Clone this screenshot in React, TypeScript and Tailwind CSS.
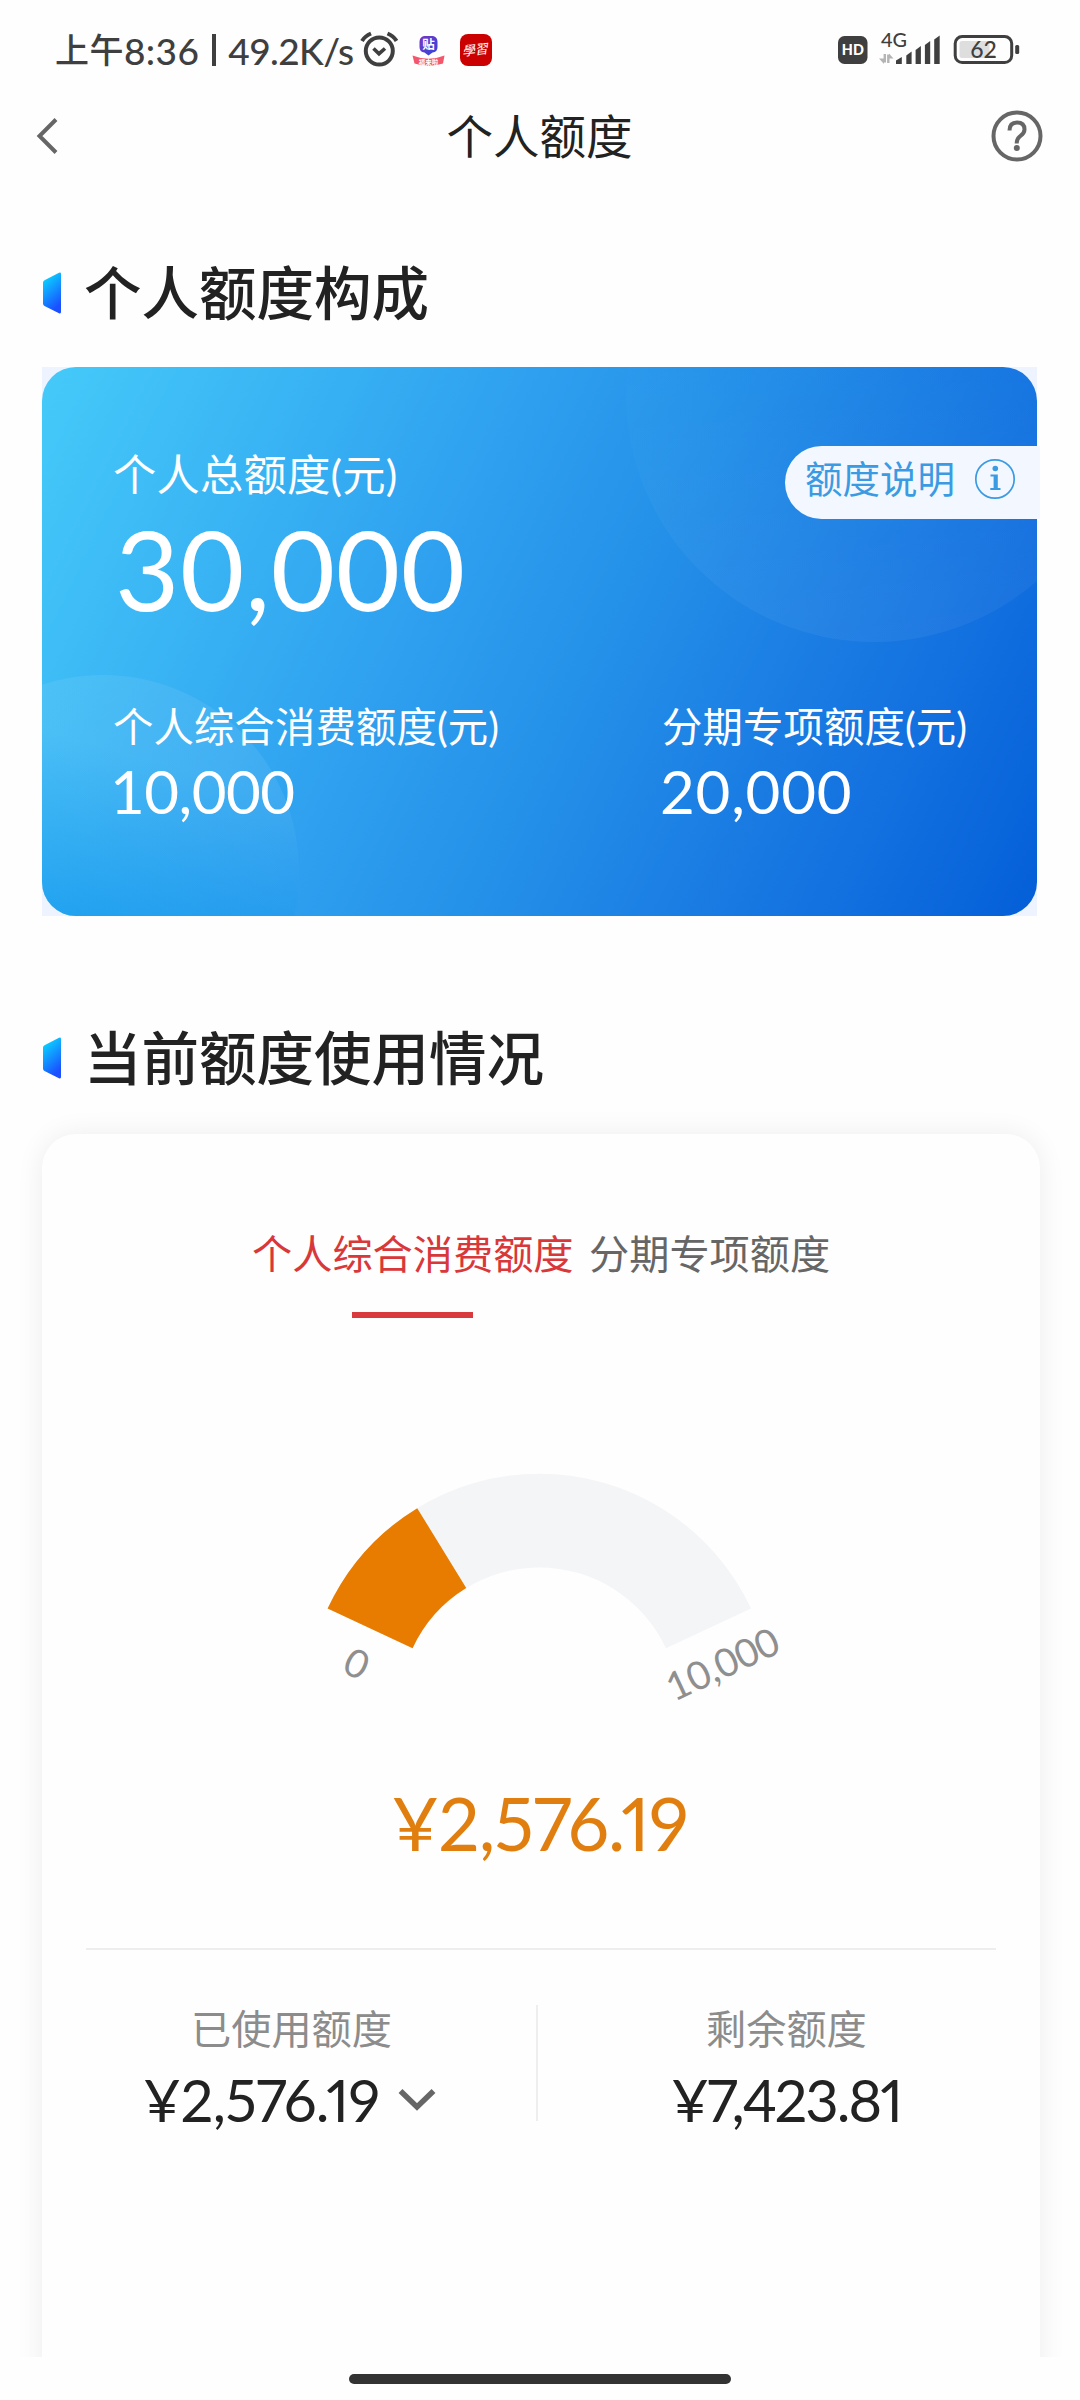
import React from "react";

const SANS = "font-['Lato','Noto_Sans_CJK_SC',sans-serif]";

function StatusBar() {
  return (
    <div className="flex h-[100px] shrink-0 items-center pl-[55px] pr-[60px] text-[#3f3f3f]">
      <div className="flex w-[300px] items-center whitespace-nowrap text-[37px] font-medium leading-none">
        <span className="text-[34px] tracking-[0.5px]">上午</span>
        <span className="tracking-[0.4px]">8:36</span>
        <span className="ml-[13px] mr-[12px] h-[32px] w-[4px] shrink-0 bg-[#3f3f3f]" />
        <span className="tracking-[-0.6px]">49.2K/s</span>
      </div>
      <svg className="ml-[5px] shrink-0" width="38" height="38" viewBox="0 0 38 38" fill="none" stroke="#3f3f3f">
        <circle cx="19.300" cy="20" r="13.500" strokeWidth="4" />
        <path d="M2 10 Q5 5 11 2.500 M36.500 10 Q33.500 5 27.500 2.500" strokeWidth="4" />
        <path d="M13.500 17.500 L19 22.700 L25 17.500" strokeWidth="3.600" />
      </svg>
      <svg className="ml-[14px] shrink-0" width="33" height="33" viewBox="0 0 33 33">
        <defs>
          <linearGradient id="tb" x1="0" y1="0" x2="1" y2="1">
            <stop offset="0" stopColor="#7a35c0" />
            <stop offset="1" stopColor="#2d48e0" />
          </linearGradient>
        </defs>
        <path d="M12 2 H21 Q25.500 3 25.500 8 V13 Q25.500 18 20.500 18.500 L16.500 21.500 L12.500 18.500 Q7.500 18 7.500 13 V8 Q7.500 3 12 2Z" fill="url(#tb)" />
        <text x="16.500" y="15.300" textAnchor="middle" fontSize="12.500" fontWeight="700" fill="#fff" className="font-['Noto_Sans_CJK_SC']">贴</text>
        <path d="M0.500 21.500 Q16.500 28 32.500 21.500 L31 29.500 Q16.500 34 2.500 29.500Z" fill="#f4566c" />
        <text x="16.500" y="31" textAnchor="middle" fontSize="6.500" fontWeight="700" fill="#fff" className="font-['Noto_Sans_CJK_SC']">福来啦</text>
      </svg>
      <svg className="ml-[15px] shrink-0" width="32" height="32" viewBox="0 0 32 32">
        <rect width="32" height="32" rx="8" fill="#cb0000" />
        <text x="16" y="20.500" textAnchor="middle" fontSize="13" fill="#fff" transform="rotate(-6 16 16) skewX(-14) translate(4 0)" className="font-['Noto_Sans_CJK_SC']">學習</text>
      </svg>
      <svg className="ml-auto shrink-0 overflow-visible" width="182" height="40" viewBox="838 30 182 40">
        <rect x="838" y="36" width="29.500" height="28" rx="6.500" fill="#3f3f3f" />
        <text x="852.800" y="55.300" textAnchor="middle" fontSize="15" fontWeight="900" fill="#fff" textLength="22" lengthAdjust="spacingAndGlyphs" className="font-['Lato']">HD</text>
        <text x="881" y="46.500" fontSize="20" fontWeight="500" fill="#3f3f3f" textLength="26" lengthAdjust="spacingAndGlyphs" className="font-['Lato']">4G</text>
        <path d="M884.800 54 V62.500 M888.300 63 V54.500" stroke="#b4b4b4" strokeWidth="2.400" />
        <path d="M884 64 L879 58.500 H884Z M889 53.500 L893.500 58.500 H889Z" fill="#b4b4b4" />
        <g fill="#3f3f3f">
          <path d="M896 64 V60.500 L901.800 57 V64Z" />
          <path d="M906.300 64 V55.500 L911.600 51.500 V64Z" />
          <path d="M915.600 64 V50 L920.900 46 V64Z" />
          <path d="M924.900 64 V45 L930.200 41 V64Z" />
          <path d="M934.200 64 V39.500 L939.700 35.500 V64Z" />
        </g>
        <rect x="955.200" y="36.600" width="56.500" height="26" rx="7" fill="none" stroke="#3f3f3f" strokeWidth="3" />
        <rect x="959.500" y="41" width="30" height="17" rx="2.500" fill="#dedede" />
        <rect x="1015.200" y="45" width="4" height="9" rx="1.500" fill="#3f3f3f" />
        <text x="983.500" y="57.500" textAnchor="middle" fontSize="23" fontWeight="500" fill="#3f3f3f" className="font-['Lato']">62</text>
      </svg>
    </div>
  );
}

function NavBar() {
  return (
    <div className="flex h-[72px] shrink-0 items-center justify-between pl-[36px] pr-[37px]">
      <svg width="52" height="36" viewBox="0 0 52 36" fill="none" stroke="#666" strokeWidth="4">
        <path d="M20 1.500 L3.500 18 L20 34.500" />
      </svg>
      <h1 className="whitespace-nowrap text-[46.500px] leading-none text-[#222]">个人额度</h1>
      <svg width="52" height="52" viewBox="0 0 52 52" fill="none" stroke="#666" strokeWidth="4">
        <circle cx="26" cy="26" r="23.500" />
        <path d="M18.500 20.500 Q18.500 12.500 26 12.500 Q33.500 12.500 33.500 19.500 Q33.500 23 29.500 25.800 Q25.700 28.500 25.700 33.500" />
        <circle cx="25.800" cy="38" r="3" fill="#666" stroke="none" />
      </svg>
    </div>
  );
}

function SectionTitle({ id, children }: { id: string; children: React.ReactNode }) {
  return (
    <div className="flex h-[60px] shrink-0 items-center pl-[43px]">
      <svg width="18" height="42" viewBox="0 0 18 42">
        <defs>
          <linearGradient id={id} x1="0" y1="0" x2="0.4" y2="1">
            <stop offset="0.050" stopColor="#08e0ff" />
            <stop offset="1" stopColor="#1a50ff" />
          </linearGradient>
        </defs>
        <path d="M0 10.500 Q0 9 1.500 8.300 L16 0.800 Q18 0 18 2 V40 Q18 42 16 41.200 L1.500 34 Q0 33.200 0 31.500Z" fill={"url(#" + id + ")"} />
      </svg>
      <h2 className="ml-[23px] whitespace-nowrap text-[57.500px] font-medium leading-none text-[#222]">{children}</h2>
    </div>
  );
}

function QuotaCard() {
  return (
    <section className="relative mx-[42px] mt-[44px] h-[549px] w-[995px] shrink-0 bg-[#eef4ff]">
      <div className="relative h-full overflow-hidden rounded-[34px] bg-[linear-gradient(116deg,#45caf9_0%,#2e9fef_40%,#2592e9_54%,#1c80e4_69%,#1472e0_82%,#045fd8_100%)] text-white">
        <div className="absolute left-[584px] top-[-221px] size-[496px] rounded-full bg-[linear-gradient(180deg,rgba(255,255,255,0)_40%,rgba(255,255,255,0.05)_100%)]" />
        <div className="absolute left-[-135px] top-[308px] size-[392px] rounded-full bg-[linear-gradient(195deg,rgba(255,255,255,0.07)_0%,rgba(255,255,255,0.07)_25%,rgba(0,140,235,0.55)_70%)]" />
        <div className="relative flex h-full flex-col pl-[71px]">
          <div className="mt-[86px] flex h-[44px] items-center whitespace-nowrap text-[43.300px] leading-none tracking-[0.2px]">个人总额度(元)</div>
          <div className="mt-[7px] flex h-[128px] items-center whitespace-nowrap text-[111px] leading-none tracking-[0.6px]">
            <span className="ml-[2px]">30,000</span>
          </div>
          <div className="mt-[74px] flex">
            <div className="w-[549px]">
              <div className="flex h-[42px] items-center whitespace-nowrap text-[40.400px] leading-none tracking-[0.1px]">个人综合消费额度(元)</div>
              <div className="-ml-[3px] mt-[9px] flex h-[68px] items-center whitespace-nowrap text-[60px] leading-none tracking-[-0.5px]">
                10,000
              </div>
            </div>
            <div>
              <div className="flex h-[42px] items-center whitespace-nowrap text-[40.400px] leading-none tracking-[0.1px]">分期专项额度(元)</div>
              <div className="-ml-[2px] mt-[9px] flex h-[68px] items-center whitespace-nowrap text-[60px] leading-none tracking-[0.8px]">
                20,000
              </div>
            </div>
          </div>
        </div>
      </div>
      <button className="absolute right-[-3px] top-[79px] flex h-[73px] w-[255px] items-center whitespace-nowrap rounded-l-full bg-[#f3f7ff] pb-[8px] pl-[20px] text-[37.500px] leading-none text-[#3b9be2]">
        额度说明
        <svg className="ml-[19px]" width="42" height="42" viewBox="0 0 42 42">
          <circle cx="21" cy="21" r="19.200" fill="none" stroke="#3b9be2" strokeWidth="1.700" />
          <circle cx="21.300" cy="10.500" r="2.800" fill="#3b9be2" />
          <path d="M16.500 16.500 H23.800 V30 H26.500 V32 H16.300 V30 H19.600 V18.500 H16.500Z" fill="#3b9be2" />
        </svg>
      </button>
    </section>
  );
}

const CX = 251.3;
const CY = 257.3;
const R_OUT = 233.6;
const R_IN = 139.8;

function sector(from: number, to: number) {
  const pt = (r: number, deg: number) => {
    const a = (deg * Math.PI) / 180;
    return (CX + r * Math.cos(a)).toFixed(2) + " " + (CY - r * Math.sin(a)).toFixed(2);
  };
  return (
    "M" + pt(R_OUT, from) + " A" + R_OUT + " " + R_OUT + " 0 0 1 " + pt(R_OUT, to) +
    " L" + pt(R_IN, to) + " A" + R_IN + " " + R_IN + " 0 0 0 " + pt(R_IN, from) + "Z"
  );
}

function Gauge({ value, max }: { value: number; max: number }) {
  const split = 155 - (130 * value) / max;
  return (
    <svg className="ml-[246px] mt-[132px] shrink-0" width="520" height="260" viewBox="0 0 520 260">
      <path d={sector(155, 25)} fill="#f4f5f7" />
      <path d={sector(155, split)} fill="#e87c00" />
      <g fill="#8f8f8f" fontSize="39" textAnchor="middle" className="font-['Lato']">
        <text transform="translate(68.700 213.700) rotate(25)" y="14">0</text>
        <text transform="translate(434.500 214) rotate(-25)" y="14" textLength="120" lengthAdjust="spacing">10,000</text>
      </g>
    </svg>
  );
}

function UsageCard() {
  return (
    <section className="mx-[42px] mt-[46px] flex h-[1400px] w-[998px] shrink-0 flex-col rounded-[34px] bg-[#fefefe] shadow-[0_0_28px_rgba(0,0,0,0.07)]">
      <div className="mt-[98px] flex h-[86px] pl-[210px] text-[40.200px] leading-none">
        <div className="flex w-[337px] flex-col whitespace-nowrap text-[#d9383a]">
          <span className="flex h-[44px] items-center">个人综合消费额度</span>
          <span className="ml-[100px] mt-[36px] h-[6px] w-[121px] bg-[#d93a3e]" />
        </div>
        <span className="flex h-[44px] items-center whitespace-nowrap text-[#666]">分期专项额度</span>
      </div>
      <Gauge value={2576.19} max={10000} />
      <div className="mt-[71px] flex h-[84px] items-center justify-center whitespace-nowrap pr-[3px] text-[73px] leading-none tracking-[-1px] text-[#e07f10] proportional-nums">
        ¥2,576.19
      </div>
      <div className="mx-[44px] mt-[83px] h-[2px] w-[910px] bg-[#eeeeee]" />
      <div className="mt-[55px] flex h-[116px]">
        <div className="flex w-[496px] flex-col border-r-2 border-[#eeeeee] pl-[101px]">
          <div className="ml-[48px] mt-[4px] flex h-[44px] items-center whitespace-nowrap text-[40.200px] leading-none text-[#8c8c8c]">已使用额度</div>
          <div className="mt-[22px] flex h-[66px] items-center whitespace-nowrap text-[58px] leading-none text-[#222]">
            <span className="w-[234px] tracking-[-0.7px] proportional-nums">¥2,576.19</span>
            <svg className="ml-[21px]" width="38" height="24" viewBox="0 0 38 24" fill="none" stroke="#666" strokeWidth="5.500">
              <path d="M2.500 3 L19 19 L35.500 3" />
            </svg>
          </div>
        </div>
        <div className="flex flex-col pl-[133px]">
          <div className="ml-[35px] mt-[4px] flex h-[44px] items-center whitespace-nowrap text-[40.200px] leading-none text-[#8c8c8c]">剩余额度</div>
          <div className="mt-[22px] flex h-[66px] items-center whitespace-nowrap text-[58px] leading-none tracking-[-2.100px] text-[#222] proportional-nums">
            ¥7,423.81
          </div>
        </div>
      </div>
    </section>
  );
}

export default function App() {
  return (
    <div className={`flex h-[2400px] w-[1080px] flex-col overflow-hidden bg-[#fefefe] ${SANS}`}>
      <main className="flex h-[2357px] shrink-0 flex-col overflow-hidden">
        <StatusBar />
        <NavBar />
        <div className="mt-[91px]">
          <SectionTitle id="mark-a">个人额度构成</SectionTitle>
        </div>
        <QuotaCard />
        <div className="mt-[112px]">
          <SectionTitle id="mark-b">当前额度使用情况</SectionTitle>
        </div>
        <UsageCard />
      </main>
      <footer className="flex h-[43px] shrink-0 justify-center pt-[17px]">
        <div className="h-[10px] w-[382px] rounded-full bg-[#333]" />
      </footer>
    </div>
  );
}
